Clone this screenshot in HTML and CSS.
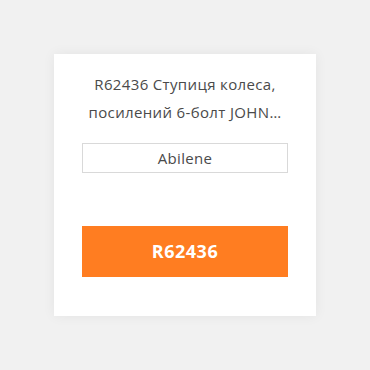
FILE: index.html
```html
<!DOCTYPE html>
<html>
<head>
<meta charset="utf-8">
<link rel="stylesheet" href="styles.css">
</head>
<body>
<div class="card">
  <div class="title">R62436 Ступиця колеса, посилений 6-болт JOHN…</div>
  <div class="city">Abilene</div>
  <div class="spacer"></div>
  <div class="btn">R62436</div>
</div>
</body>
</html>
```
FILE: styles.css
```css
html, body { margin: 0; padding: 0; }
body {
  width: 370px;
  height: 370px;
  background: #f1f1f1;
  font-family: "Open Sans", "DejaVu Sans", sans-serif;
  padding: 54px;
  box-sizing: border-box;
}
.card {
  width: 262px;
  height: 262px;
  box-sizing: border-box;
  background: #fff;
  box-shadow: 0 0 12px rgba(0,0,0,0.06);
  padding: 16px 28px 39px;
  display: flex;
  flex-direction: column;
}
.title {
  font-size: 15px;
  letter-spacing: 0.35px;
  line-height: 28px;
  color: #4a4a4a;
  text-align: center;
  margin: 0 -10px;
}
.city {
  margin-top: 17px;
  height: 30px;
  box-sizing: border-box;
  border: 1px solid #d9d9d9;
  font-size: 15px;
  letter-spacing: 0.3px;
  line-height: 28px;
  color: #4a4a4a;
  text-align: center;
}
.spacer { flex: 1; }
.btn {
  height: 51px;
  background: #ff7d21;
  color: #fff;
  font-weight: 700;
  font-size: 18px;
  letter-spacing: 0.5px;
  line-height: 51px;
  text-align: center;
}
```
